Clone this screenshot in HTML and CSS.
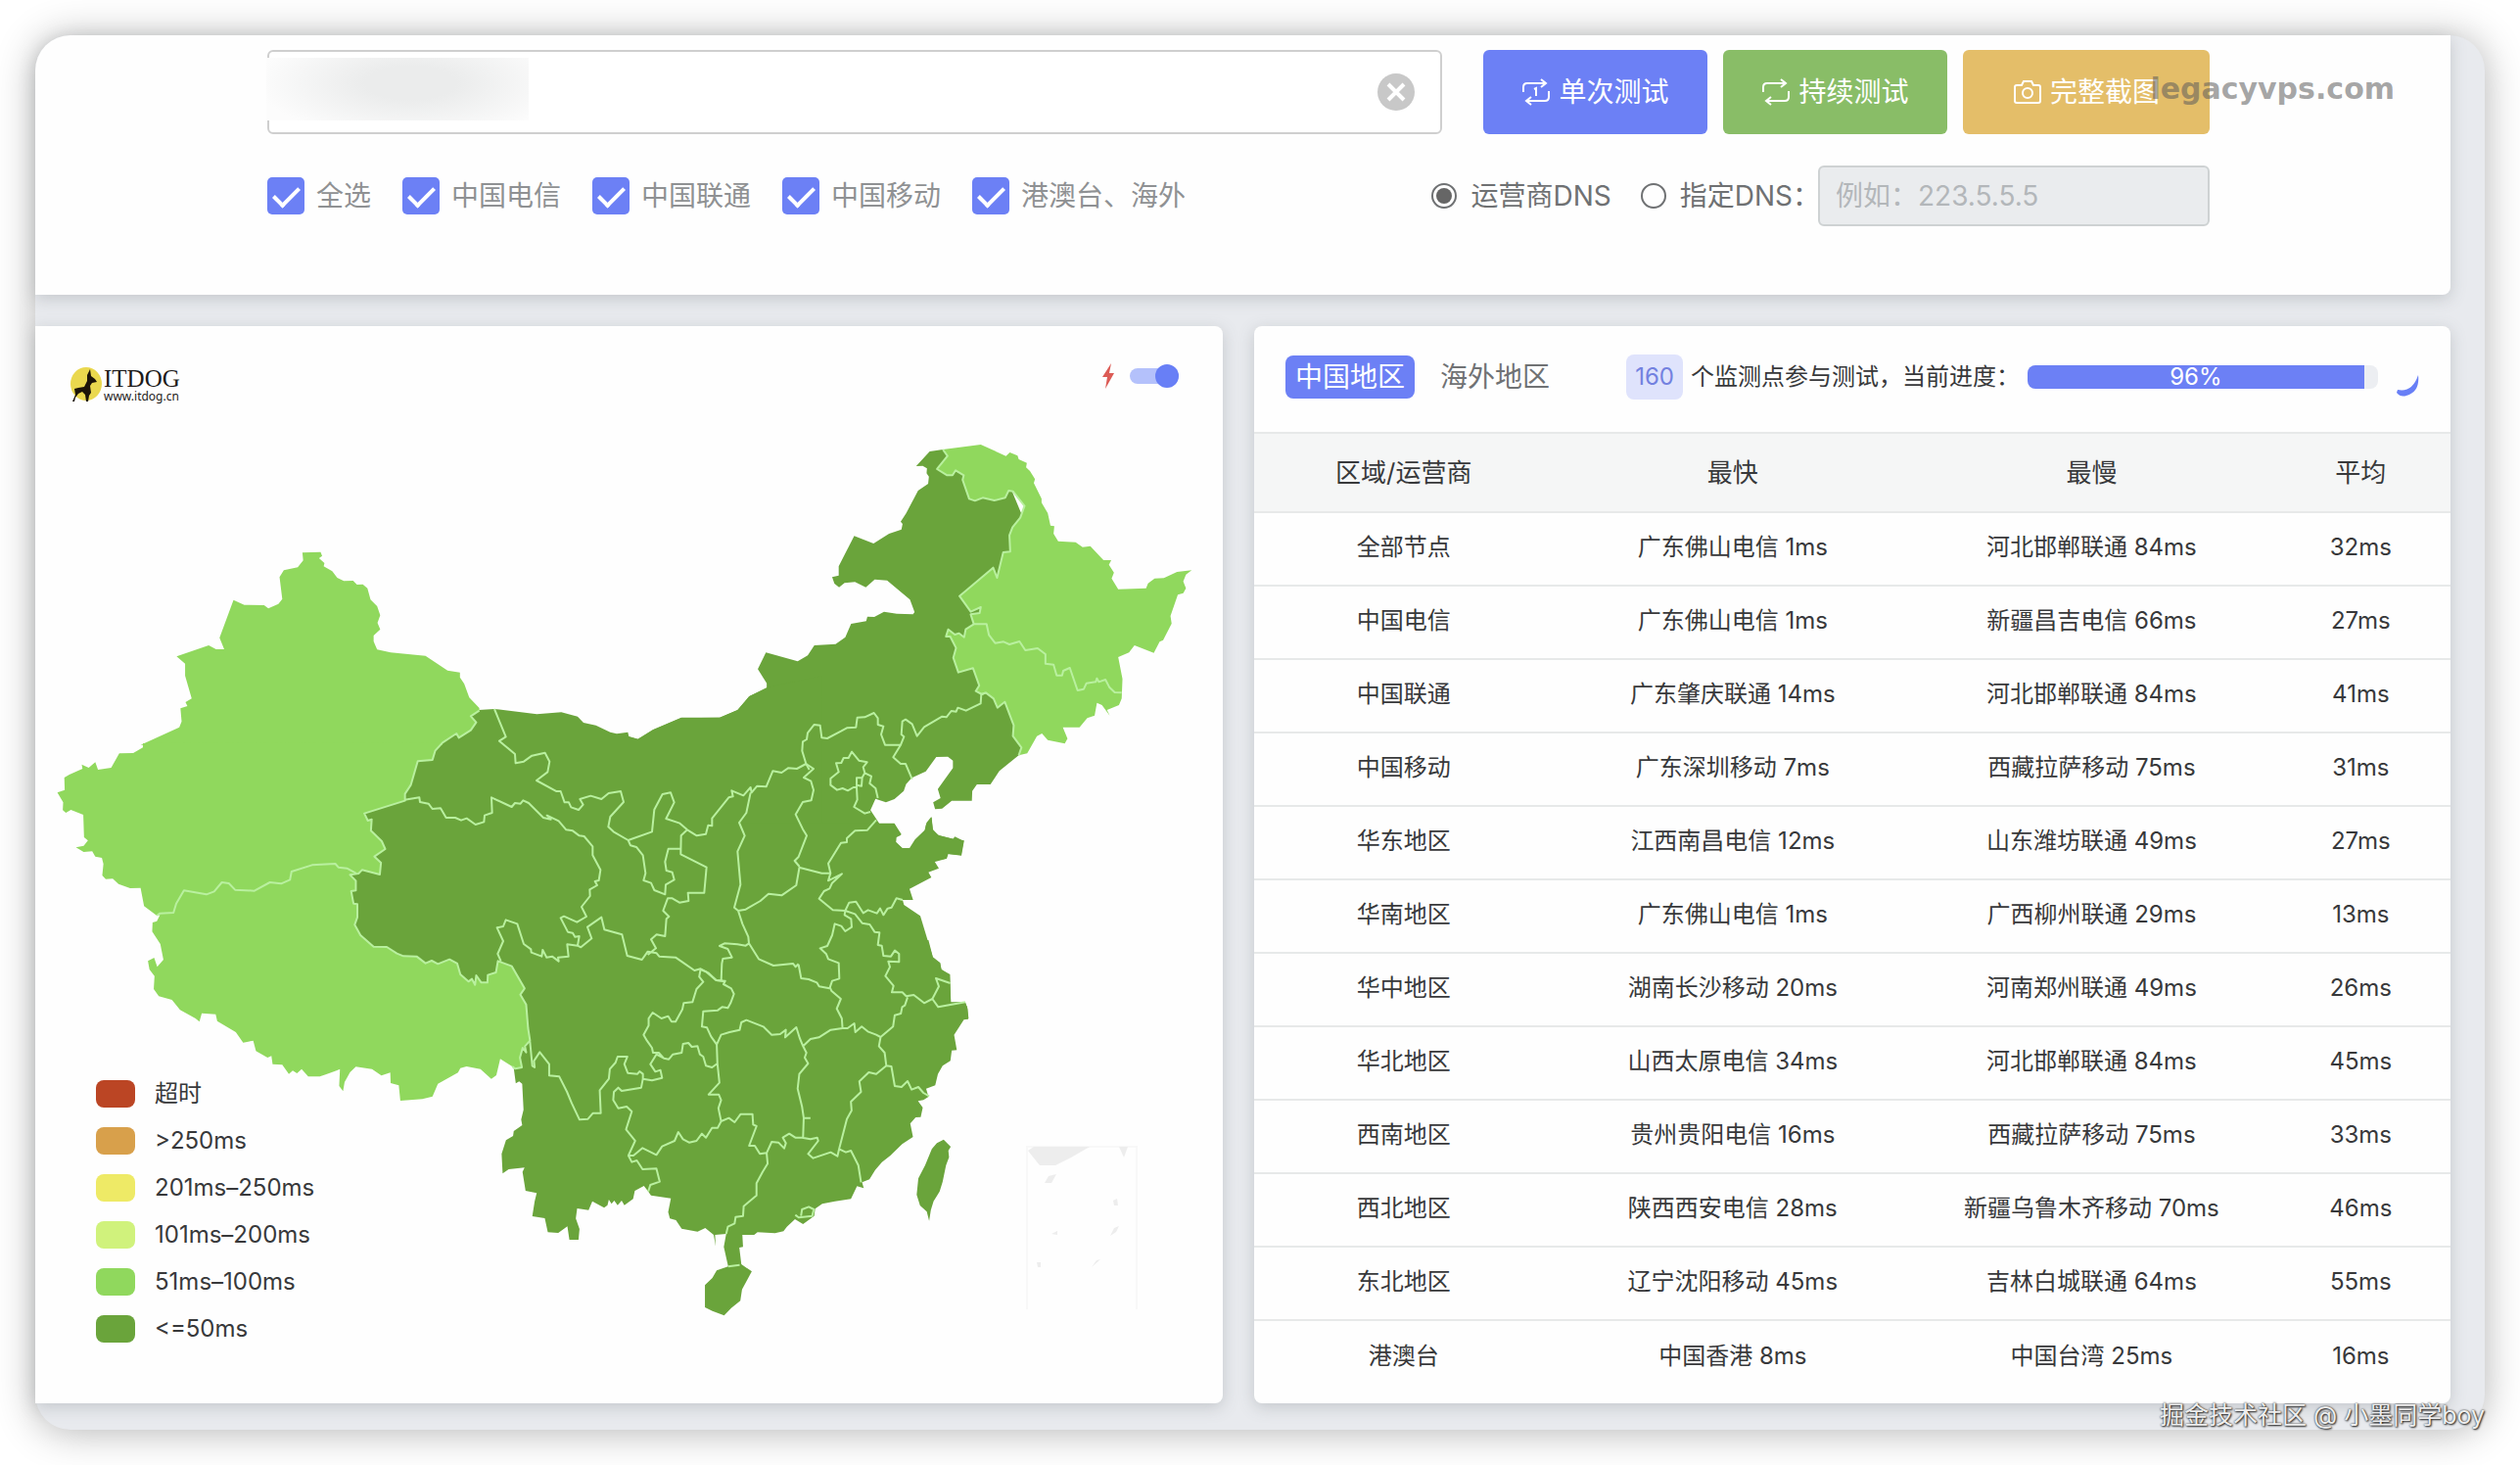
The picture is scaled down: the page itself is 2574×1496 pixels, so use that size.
FILE: index.html
```html
<!DOCTYPE html>
<html lang="zh-CN">
<head>
<meta charset="utf-8">
<title>ITDOG</title>
<link rel="stylesheet" href="styles.css">
</head>
<body>
<main class="window">
  <form class="card query">
    <div class="query-row">
      <div class="host">
        <input class="host-input" type="text" aria-label="host">
        <span class="host-mask"></span>
        <button class="host-clear" type="button" aria-label="clear">
          <svg viewBox="0 0 38 38"><circle cx="19" cy="19" r="19"/><path d="M11 11l16 16M27 11L11 27"/></svg>
        </button>
      </div>
      <div class="actions">
        <button class="btn btn-once" type="button">
          <svg class="btn-icon" viewBox="0 0 30 28"><path d="M2 14V9q0-4 4-4h18M20 1l5 4-5 4M28 13v6q0 4-4 4H6M10 19l-5 4 5 4M13 11l2-1v8"/></svg>
          单次测试
        </button>
        <button class="btn btn-loop" type="button">
          <svg class="btn-icon" viewBox="0 0 30 28"><path d="M2 14V9q0-4 4-4h18M20 1l5 4-5 4M28 13v6q0 4-4 4H6M10 19l-5 4 5 4"/></svg>
          持续测试
        </button>
        <button class="btn btn-shot" type="button">
          <svg class="btn-icon" viewBox="0 0 30 28"><path d="M4 7h5l2-4h8l2 4h5q2 0 2 2v14q0 2-2 2H4q-2 0-2-2V9q0-2 2-2z"/><circle cx="15" cy="15" r="5"/></svg>
          完整截图
        </button>
        <span class="site-mark">legacyvps.com</span>
      </div>
    </div>
    <div class="query-row options">
      <div class="checks">
        <label class="check"><input type="checkbox" checked>全选</label>
        <label class="check"><input type="checkbox" checked>中国电信</label>
        <label class="check"><input type="checkbox" checked>中国联通</label>
        <label class="check"><input type="checkbox" checked>中国移动</label>
        <label class="check"><input type="checkbox" checked>港澳台、海外</label>
      </div>
      <div class="dns">
        <label class="radio"><input type="radio" name="dns" checked>运营商DNS</label>
        <label class="radio"><input type="radio" name="dns">指定DNS：</label>
        <input class="dns-input" type="text" placeholder="例如：223.5.5.5" aria-label="DNS" disabled>
      </div>
    </div>
  </form>

  <div class="panels">
    <section class="card map-card">
      <header class="map-head">
        <a class="logo" href="#">
          <svg class="logo-dog" viewBox="0 0 32 36">
            <ellipse cx="16" cy="17" rx="16" ry="17"/>
            <path d="M20 2L21 9L25 12L27 15L22 16L20 19L21 26L19 29L18 35H16L15 28L12 25L8 27L5 31L4 35H2L5 28L4 22L8 21L14 20L17 14L17 8z"/>
          </svg>
          <span class="logo-text"><b>ITDOG</b><small>www.itdog.cn</small></span>
        </a>
        <label class="live">
          <svg class="bolt" viewBox="0 0 12 26"><path d="M9 0L0 14H5L3 26L12 10H7z"/></svg>
          <input class="switch" type="checkbox" checked aria-label="live">
        </label>
      </header>
      <div class="map-body">
        <svg class="map" viewBox="36 433 1213 1000">
          <g class="fast">
            <path transform="translate(640 420) scale(.39541 .33333)" d="M817 117L783 123L748 168L765 167L776 175L775 190L781 200L779 222L753 243L722 313L708 338L713 345L710 362L678 375L638 405L588 382L548 475L548 503L531 508L537 528L549 539L563 526L590 523L618 539L641 515L673 518L732 577L744 615L740 622L698 620L665 614L640 630L622 629L619 643L580 651L565 692L540 713L485 717L468 748L442 766L360 739L339 790L362 833L362 848L318 872L287 915L240 938L140 940L70 975L29 1004L5 997L0 985L0 1380L797 1380L827 1370L831 1356L865 1361L872 1315L845 1310L807 1300L792 1285L787 1243L775 1260L770 1283L745 1312L731 1338L712 1338L696 1320L696 1304L710 1296L692 1263L653 1263L630 1222L643 1187L670 1198L692 1188L716 1163L722 1142L737 1123L773 1103L800 1059L830 1058L843 1070L843 1093L804 1157L811 1185L792 1198L797 1219L815 1217L840 1193L892 1193L893 1163L905 1143L940 1143L963 1102L1013 1054L1100 900L1050 400L980 200z"/>
            <path transform="translate(340 680) scale(.33333)" d="M447 135L495 132L625 148L700 142L750 155L768 174L806 182L850 203L870 208L904 203L907 216L935 224L980 196L1068 158L1187 158L1240 135L1275 94L1330 66L1500 30V1200H600L450 1100L0 1000V400L250 200z"/>
            <path transform="translate(740 700) scale(.33333)" d="M635 403L638 440L655 458L700 470L706 463L733 476L725 520L684 516L680 530L643 538L657 560L625 572L634 588L567 623L578 657L546 657L550 672L600 706L640 838L660 850L665 870L690 888L694 970L738 970L745 990L748 1020H0V422H520L541 458L527 465L525 480L545 498H570L613 450L618 425z"/>
            <path transform="translate(480 960) scale(.34439 .33333)" d="M1360 0L1373 52L1395 70L1398 90L1424 105L1426 192L1467 190L1475 205L1478 242L1465 244L1436 290L1444 337L1429 338L1425 370L1402 385L1388 410L1380 445L1353 455L1360 480L1345 490L1329 493L1343 513L1337 542L1322 543L1306 562L1314 603L1282 625L1247 660L1222 680L1202 704L1185 733L1163 742L1168 760L1148 754L1130 793L1083 800L1045 808L1024 823L1021 845L988 870L964 855L940 878L930 892L905 898L853 895L843 903H808L810 940L799 942L805 993L836 1015L807 1070L802 1105L775 1127L754 1150L719 1136L697 1125V1057L719 1035L732 1012L766 1000L753 940L760 900L727 903L729 938L723 903L698 882L675 893L628 884L611 858L593 853L588 833L596 791L537 782L529 770L516 753L489 768L484 793L458 812L450 798L438 812L428 798L420 808L412 795L408 812L398 820L363 800L352 827L318 822L314 853L325 885L322 918H295L289 877L262 897L231 895L222 852L185 846L192 800L198 775L165 768L156 710L162 697L115 702L97 715L94 655L107 613L128 600L130 585L155 567L152 550L159 520L155 440L146 433L136 439L129 385L100 350V0z"/>
            <path transform="translate(480 960) scale(.34439 .33333)" d="M1405 611L1426 633L1419 645L1421 665L1412 690L1402 740L1393 770L1375 800L1367 827L1362 860L1355 832L1335 813L1325 780L1330 730L1350 690L1370 640L1385 622z"/>
          </g>
          <g class="medium">
            <path transform="translate(40 340) scale(.39541 .33333)" d="M680 673L727 671L731 683L723 690L737 705L735 715L757 730L770 750L787 760L811 759L821 771L836 770L848 782L856 817L873 837L881 865L874 888L881 908L864 927V945L873 970L908 979L998 989L1055 1034L1087 1040V1055L1098 1075L1111 1117L1137 1149V1157L1115 1174L1129 1193L1115 1217L1084 1240L1078 1225L1042 1257V1262H262L362 1208L368 1190L365 1150L383 1143L378 1131L394 1120L377 1050V1013L355 991L438 957L457 969H478L466 934L502 818L530 833L581 834L592 844L618 830L628 815L621 748L632 727L668 718L682 697z"/>
            <path transform="translate(40 740) scale(.39541 .33333)" d="M1042 55L1023 80L1016 108L978 112L960 185L945 212V233L840 272L849 294L859 290L857 325L885 357L894 381L866 404L883 423L880 459L834 445L825 456L803 460L818 478V508L806 510L812 548L822 550V590L815 613L830 645L864 680L898 681L924 701L941 709L975 710L998 731L1014 723L1030 733L1060 719L1080 732L1088 765L1109 787L1118 779L1126 797L1129 768L1142 790H1158L1159 767L1180 759L1185 724L1221 740L1254 808L1243 827L1258 857L1263 930L1268 968L1255 985L1258 1004L1249 990L1242 1020L1247 1050L1230 1054L1222 1047L1191 1024L1181 1074L1168 1085L1140 1055L1104 1047L1088 1052L1082 1066L1030 1100L1016 1139L990 1147L933 1152L929 1105L908 1098L907 1066L884 1075L860 1055L818 1048L803 1065L789 1095L785 1123L775 1107L777 1055L768 1060L740 1072L725 1078H695L678 1055L666 1068L655 1060L645 1070L628 1042L603 1040L600 1015L590 1020L560 1000L553 968L527 974L508 942L460 908L456 887L420 884L414 910L404 900L364 874L343 843L309 832L296 810L298 770L285 750L281 724L297 714L305 742L321 720L313 672L292 634L293 606L304 602L312 583L304 585L271 556L262 500L235 501L205 488L190 472L172 473L163 462L166 427L162 408L145 404L137 388L115 390L95 376L115 371L126 355L116 345L114 276L82 261L69 270L61 262L62 238L47 208L66 200L65 162L78 153L112 135L110 122L128 132L145 115L152 138L186 132L207 88L243 87L268 70V57z"/>
            <path transform="translate(640 420) scale(.39541 .33333)" d="M817 117L915 102L980 137L990 126L1010 136L1013 147L1034 158L1032 172L1042 183L1055 208L1052 220L1072 268V280L1088 312L1095 350L1105 352L1103 375L1115 398L1160 401L1178 416L1198 413L1232 456H1252L1246 470L1259 494L1253 512L1270 545L1342 542L1347 527L1364 512L1388 511L1422 492L1460 487L1445 500L1438 521L1445 542L1438 557L1424 562L1405 627L1408 650L1386 701L1377 706L1362 740L1312 717L1298 739L1270 753L1281 820L1279 880L1272 900L1241 915L1248 932L1228 900L1215 893L1209 932L1190 940L1170 968H1127L1139 1003L1132 1018L1088 1007L1073 987L1060 995L1035 1048L1013 1054L1020 1030L998 995L1000 962L977 890L958 908L948 880L928 862L918 867L902 857L911 840L895 787L857 800L844 755L851 725L836 690H825L831 668L848 684L859 680L872 692L876 668L897 652L889 622L912 618L915 600L889 614L860 566L947 479L957 510L973 432L991 430L989 380L997 355L1017 326L1028 290L998 245L987 243L978 265L950 273L920 265L900 274L885 268L868 210L871 196L850 181L842 196H828L802 177L829 137z"/>
          </g>
          <g class="borders">
            <path transform="translate(40 740) scale(.39541 .33333)" d="M1137 -43L1115 -26L1129 -7L1115 17L1084 40L1078 27L1042 55L1023 80L1016 108L978 112L960 185L945 212V233L840 272L849 294L859 290L857 325L885 357L894 381L866 404L883 423L880 459L834 445L825 456L803 460L818 478V508L806 510L812 548L822 550V590L815 613L830 645L864 680L898 681L924 701L941 709L975 710L998 731L1014 723L1030 733L1060 719L1080 732L1088 765L1109 787L1118 779L1126 797L1129 768L1142 790H1158L1159 767L1180 759L1185 724L1221 740L1254 808L1243 827L1258 857L1263 930L1268 968L1255 985L1258 1004L1249 990L1242 1020L1247 1050L1230 1054L1222 1047M304 585L312 578L347 576L354 548L374 508L432 520L452 511L472 483L490 486L506 506L556 509L596 483L625 487L648 475L652 450L705 430L765 426L773 437L795 440L818 455"/>
            <path transform="translate(640 420) scale(.39541 .33333)" d="M1013 1054L1020 1030L998 995L1000 962L977 890L958 908L948 880L928 862L918 867L902 857L911 840L895 787L857 800L844 755L851 725L836 690H825L831 668L848 684L859 680L872 692L876 668L897 652L889 622L912 618L915 600L889 614L860 566L947 479L957 510L973 432L991 430L989 380L997 355L1017 326L1028 290L998 245L987 243L978 265L950 273L920 265L900 274L885 268L868 210L871 196L850 181L842 196H828L802 177L829 137L817 117M897 652H930L936 685L952 710L974 706L989 714L1015 705L1030 732L1062 726L1082 744V773L1103 776L1111 809H1125L1128 795L1145 786L1165 855L1181 851L1188 833L1212 829L1215 818L1220 829L1237 822L1247 845L1261 861L1279 862"/>
            <path transform="translate(340 680) scale(.33333)" d="M495 132L530 217L510 230L558 270L560 298L585 293L610 275L650 266L664 293L658 325L624 351L684 384H698L710 418H723L730 433L753 441L767 425L757 408L790 398L823 408L845 390L882 384L891 417L850 462L844 493L860 508L905 534L978 508L985 440L1010 393L1035 388L1046 418L1021 468L1063 482L1086 502L1115 520L1143 515L1150 488L1162 490V467L1213 403L1226 400L1222 382L1258 397L1280 372L1283 388L1300 368L1328 370L1348 322L1375 327L1395 313L1422 315L1450 300M220 410L265 403L267 417L293 422L305 438L330 436L347 465H375L393 473L410 467L437 486L463 478L465 458L488 450L486 403L548 432L558 420L575 422L583 412L600 420L645 465L668 470L656 458L692 475L715 502L735 505L755 520L770 522L796 553V580L820 625L815 657L803 660L810 672L787 685L788 705L762 738L777 768L748 785L708 767L698 772L720 815L735 818L742 830L755 828L750 857L718 853L722 890L690 893L692 905L672 890L655 893L643 870L640 890L608 878L607 868L585 852L565 790L530 778L522 798L503 802L522 843L505 882L515 905M750 857L760 862L793 835L780 800L823 770L832 808L886 823L902 888L947 900L965 875L992 880L1000 890L1050 893L1075 910L1108 933L1127 928L1150 940L1175 963L1202 967M965 885L990 865L975 838L992 823L1018 828L1022 775L1030 768L1012 750L1026 712H1040L1062 725L1090 720L1088 695H1138L1145 617L1066 577V560H1028L1018 600L1022 627L1040 632L1046 655L1020 670L1018 700L985 687L975 665L952 657L958 635L950 580L930 555L912 550L905 534M1086 502L1067 520L1066 577M1280 388L1267 450L1245 480L1262 520L1240 568L1249 670L1230 740L1242 750L1255 790L1273 830L1275 850L1265 857L1240 853L1200 850L1185 858L1210 867L1223 893L1195 897L1192 912L1190 963M1242 750L1265 746L1310 720L1335 698L1375 703L1420 672L1430 615M1450 300L1473 315L1443 342L1465 353L1473 380L1466 412L1440 417L1418 455L1440 500L1452 520L1427 585L1415 597L1430 615M1275 850L1305 898L1350 918L1410 912L1418 922L1427 913"/>
            <path transform="translate(740 700) scale(.33333)" d="M260 258L250 240L238 200L240 172L252 165L255 145L275 120L293 122L298 160L315 162L357 140L375 130L403 128L407 98L430 97L458 84L470 100V120L487 125L480 150L492 182H540L517 220L540 240H555L575 287M540 182L550 157L542 150L545 110L555 104L575 118L590 155L612 127L667 95L680 97L695 78L710 80L715 68L740 77L785 55L787 27L800 22M390 203L380 222H365L358 237L342 238L350 265L325 285V305L345 320L362 315L378 322L395 312H405V283L422 282L430 268L425 250L437 235L412 230zM430 268L450 278L445 300L463 315L470 345M422 282L420 308L405 305M405 312L407 350L397 372L430 392L447 387M465 412L438 443L400 445L375 468V480L357 482L318 545L325 575H298L228 557M325 575L318 598L360 577L330 605L322 622L305 630L290 653L332 688L370 690L382 665L403 662L425 697L440 688L467 698L477 683L487 703L500 683L512 680L527 652L546 657M370 690L400 700L422 728L445 732L460 755L475 757L470 795L482 797L487 828L510 830L522 812L535 822V847L502 845L507 862L493 890L518 920L513 940H545L557 952L580 948L612 973L637 960L657 922L648 897L692 912M637 960L655 985L738 970M370 690L368 703L388 715L390 740L370 753L358 737L338 730L330 765L315 798L293 805L312 823L318 838L350 850L352 898L330 905L322 928M227 855L235 897L258 900L283 910L290 922L322 928"/>
            <path transform="translate(480 960) scale(.34439 .33333)" d="M684 90L680 112L692 128L672 150L660 190L634 193L630 212L610 250H598L588 233L568 240L542 222L530 240V262L515 290L525 308L540 330L543 345H560L575 362L590 365L602 350L628 345L632 318L648 315L658 327L675 325L682 350L692 357L700 385L718 390L734 378L732 320L715 295L703 268L688 265L692 218L735 215L748 205L765 208L773 193L783 165L775 148L752 135L757 125L730 123L700 97zM732 320L745 290L770 282L800 275L805 252L820 245L870 265L895 290L920 288L937 275L935 298L968 267L978 300L988 325L1010 303L1035 298L1070 275L1105 270L1103 240L1088 210L1100 180L1072 155L1068 145M1105 270H1120L1140 255L1143 282L1162 265L1180 280L1205 290L1218 297L1213 325L1230 345L1235 385L1205 410L1183 405L1155 433L1160 465L1130 495L1132 522L1118 548L1105 600L1095 640M1235 385L1250 387L1260 447L1280 450L1298 432L1310 458L1330 450L1345 468L1362 478M1218 297L1255 265L1260 230L1278 225L1282 205L1290 200L1298 175M988 325L998 345L993 360L1003 378L977 410L972 455L985 510L990 545H1010M990 545L988 605M745 555L768 545L785 558L803 533H838L840 565L850 570L828 630H845L860 655L880 652L895 618L915 620L932 638L937 622L928 605L947 593L965 605H985L1010 610L1030 605L1033 615L1003 655L1018 668L1070 650L1090 662L1095 640L1115 650L1130 645L1152 690L1160 742M880 652L883 685L868 710L850 745V782L812 815L810 845L788 848L785 868L765 878L760 900M766 1000L800 995M734 378L740 437L708 473H738L745 490L737 515L745 555L735 575H718L700 605L688 593L672 615L650 620L632 610L618 588L607 615L570 632L553 658L512 637L485 660H470L480 680L495 675L512 702L553 700L563 740L535 750L529 770M470 660L490 615L463 580L480 525L465 510L440 515L425 490L427 465L440 452L450 462L508 452L513 425L540 430L570 422L565 398L550 403L535 380L553 350L575 362M178 310L185 385L192 390L190 370L207 343L235 380V415L265 418L288 465L302 500L325 550L350 548L365 530H388L385 460L412 425L415 395L432 375L438 357H467L458 380L468 407L497 410L503 402L513 410V425M982 845L985 825L1005 817L1020 825L1015 845L975 850L965 842"/>
          </g>
          <g class="islands">
            <path class="islands-frame" d="M1049 1337V1171H1161V1337"/>
            <path d="M1050 1175L1056 1171H1113L1094 1182L1078 1190H1062zM1143 1171H1152L1148 1182zM1067 1208L1071 1201L1079 1199L1074 1208zM1137 1226L1141 1224L1142 1231H1138zM1134 1262L1138 1254L1143 1252L1140 1258zM1115 1294L1120 1287L1124 1286zM1059 1289H1063V1294H1060zM1074 1260L1080 1257V1261z"/>
          </g>
        </svg>
        <ul class="legend">
          <li><i class="swatch timeout"></i>超时</li>
          <li><i class="swatch over250"></i>&gt;250ms</li>
          <li><i class="swatch to250"></i>201ms–250ms</li>
          <li><i class="swatch to200"></i>101ms–200ms</li>
          <li><i class="swatch to100"></i>51ms–100ms</li>
          <li><i class="swatch to50"></i>&lt;=50ms</li>
        </ul>
      </div>
    </section>

    <section class="card result-card">
      <header class="result-head">
        <nav class="tabs">
          <button class="tab active" type="button">中国地区</button>
          <button class="tab" type="button">海外地区</button>
        </nav>
        <span class="count">160</span>
        <span class="status">个监测点参与测试，当前进度：</span>
        <div class="progress"><div class="progress-bar" style="width:96%">96%</div></div>
        <svg class="spinner" viewBox="0 0 24 24"><path d="M23 2Q25 19 11 23Q5 25 1 20L2 17Q17 20 23 2z"/></svg>
      </header>
      <table class="result">
        <colgroup><col class="c-area"><col class="c-fast"><col class="c-slow"><col class="c-avg"></colgroup>
        <thead><tr><th>区域/运营商</th><th>最快</th><th>最慢</th><th>平均</th></tr></thead>
        <tbody>
          <tr><td>全部节点</td><td>广东佛山电信 1ms</td><td>河北邯郸联通 84ms</td><td>32ms</td></tr>
          <tr><td>中国电信</td><td>广东佛山电信 1ms</td><td>新疆昌吉电信 66ms</td><td>27ms</td></tr>
          <tr><td>中国联通</td><td>广东肇庆联通 14ms</td><td>河北邯郸联通 84ms</td><td>41ms</td></tr>
          <tr><td>中国移动</td><td>广东深圳移动 7ms</td><td>西藏拉萨移动 75ms</td><td>31ms</td></tr>
          <tr><td>华东地区</td><td>江西南昌电信 12ms</td><td>山东潍坊联通 49ms</td><td>27ms</td></tr>
          <tr><td>华南地区</td><td>广东佛山电信 1ms</td><td>广西柳州联通 29ms</td><td>13ms</td></tr>
          <tr><td>华中地区</td><td>湖南长沙移动 20ms</td><td>河南郑州联通 49ms</td><td>26ms</td></tr>
          <tr><td>华北地区</td><td>山西太原电信 34ms</td><td>河北邯郸联通 84ms</td><td>45ms</td></tr>
          <tr><td>西南地区</td><td>贵州贵阳电信 16ms</td><td>西藏拉萨移动 75ms</td><td>33ms</td></tr>
          <tr><td>西北地区</td><td>陕西西安电信 28ms</td><td>新疆乌鲁木齐移动 70ms</td><td>46ms</td></tr>
          <tr><td>东北地区</td><td>辽宁沈阳移动 45ms</td><td>吉林白城联通 64ms</td><td>55ms</td></tr>
          <tr><td>港澳台</td><td>中国香港 8ms</td><td>中国台湾 25ms</td><td>16ms</td></tr>
        </tbody>
      </table>
    </section>
  </div>
  <span class="author-mark">掘金技术社区 @ 小墨同学boy</span>
</main>
</body>
</html>
```
FILE: styles.css
```css
* { box-sizing: border-box; }

body {
  margin: 0;
  padding: 36px;
  background: #fff;
  color: #38393b;
  font-family: "Inter", "Noto Sans CJK SC", sans-serif;
  font-size: 24px;
  line-height: 32px;
}

button, input { font: inherit; color: inherit; }
button { border: 0; padding: 0; cursor: pointer; }

.window {
  position: relative;
  display: flex;
  flex-direction: column;
  gap: 32px;
  padding: 0 35px 27px 0;
  border-radius: 36px;
  background: #e8eaee;
  box-shadow: 0 2px 40px rgba(0, 0, 0, .3);
}

.card {
  background: #fefefe;
  border-radius: 8px;
  box-shadow: 0 4px 16px rgba(90, 100, 105, .25);
}

/* Query form */
.query {
  display: flex;
  flex-direction: column;
  gap: 32px;
  padding: 15px 246px 70px 237px;
  border-radius: 36px 0 8px 0;
  font-size: 28px;
}

.query-row {
  display: flex;
  align-items: center;
  justify-content: space-between;
  gap: 42px;
}

.host { position: relative; flex: 1; display: flex; }

.host-input {
  width: 100%;
  height: 86px;
  padding: 0 80px 0 20px;
  border: 2px solid #cfcfcf;
  border-radius: 6px;
  background: #fff;
}

.host-mask {
  position: absolute;
  left: -1px;
  top: 8px;
  width: 268px;
  height: 64px;
  background: radial-gradient(ellipse 58% 90% at 55% 40%, #ebecec 30%, #fcfcfc);
}

.host-clear {
  position: absolute;
  right: 28px;
  top: 24px;
  width: 38px;
  height: 38px;
  background: none;
}
.host-clear svg { display: block; }
.host-clear circle { fill: #c8c8c8; }
.host-clear path { stroke: #fff; stroke-width: 4; }

.actions { position: relative; display: flex; gap: 16px; }

.btn {
  display: flex;
  align-items: center;
  justify-content: center;
  gap: 8px;
  width: 229px;
  height: 86px;
  border-radius: 6px;
  color: #fff;
}
.btn-once { background: #6c80f5; }
.btn-loop { background: #89bd67; }
.btn-shot { width: 252px; background: #e4be69; }
.btn-icon { width: 30px; height: 28px; fill: none; stroke: #fff; stroke-width: 2; }

.site-mark {
  position: absolute;
  right: -189px;
  top: 22px;
  color: rgba(90, 90, 90, .55);
  font: bold 30px/36px "DejaVu Sans", sans-serif;
}

.checks, .dns { display: flex; align-items: center; }
.checks { gap: 32px; color: #8f9193; }
.check, .radio { display: flex; align-items: center; }
.check { gap: 12px; }

.check input {
  appearance: none;
  display: flex;
  justify-content: center;
  width: 38px;
  height: 38px;
  margin: 0;
  border-radius: 5px;
  background: #6c80f5;
}
.check input::before {
  content: "";
  width: 11px;
  height: 22px;
  margin-top: 4px;
  border: solid #fff;
  border-width: 0 4px 4px 0;
  transform: rotate(45deg);
}

.dns { gap: 30px; color: #6f7173; }
.radio { gap: 14px; }
.radio input {
  appearance: none;
  width: 26px;
  height: 26px;
  margin: 0;
  border: 2px solid #6f7173;
  border-radius: 50%;
}
.radio input:checked { background: #666 content-box; padding: 3px; }

.dns-input {
  width: 400px;
  height: 62px;
  margin-left: -32px;
  padding: 0 16px;
  border: 2px solid #ced2d3;
  border-radius: 6px;
  background: #eaecee;
}
.dns-input::placeholder { color: #b3b7ba; opacity: 1; }

/* Panels */
.panels {
  display: grid;
  grid-template-columns: 1213fr 1222fr;
  gap: 32px;
}

.map-card { border-radius: 0 8px 8px 0; }

.map-head {
  display: flex;
  align-items: flex-start;
  justify-content: space-between;
  height: 100px;
  padding: 38px 45px 0 36px;
}

.logo {
  display: flex;
  gap: 2px;
  margin-top: 4px;
  color: #1d1b1a;
  text-decoration: none;
}
.logo-dog { width: 32px; height: 36px; }
.logo-dog ellipse { fill: #ead84e; }
.logo-dog path { fill: #1c1408; }
.logo-text { display: flex; flex-direction: column; }
.logo-text b { font: 25px/24px "Liberation Serif", serif; }
.logo-text small { font: 12px/12px "Noto Sans", sans-serif; }

.live { display: flex; align-items: center; gap: 16px; }
.bolt { width: 12px; height: 26px; fill: #dc5b55; }
.switch {
  appearance: none;
  display: flex;
  align-items: center;
  justify-content: flex-end;
  width: 50px;
  height: 16px;
  margin: 0;
  border-radius: 8px;
  background: #b4c1fb;
}
.switch::before {
  content: "";
  width: 24px;
  height: 24px;
  border-radius: 50%;
  background: #687ff6;
}

.map-body { display: grid; }
.map, .legend { grid-area: 1 / 1; }
.map { display: block; width: 100%; }
.fast { fill: #6aa43b; }
.medium { fill: #90d85d; }
.borders path {
  fill: none;
  stroke: #b9f09f;
  stroke-width: 2px;
  stroke-linejoin: round;
  vector-effect: non-scaling-stroke;
}
.islands { fill: #ededed; }
.islands .islands-frame { fill: none; stroke: #f8f8f8; stroke-width: 2; }

.legend {
  z-index: 1;
  align-self: end;
  justify-self: start;
  display: flex;
  flex-direction: column;
  gap: 16px;
  margin: 0;
  padding: 0 0 60px 62px;
  list-style: none;
}
.legend li { display: flex; align-items: center; gap: 20px; }
.swatch { width: 40px; height: 28px; border-radius: 8px; }
.timeout { background: #bb4524; }
.over250 { background: #d8a04b; }
.to250 { background: #eeea66; }
.to200 { background: #d0f27c; }
.to100 { background: #90d85d; }
.to50 { background: #6aa43b; }

/* Results */
.result-card { overflow: hidden; }

.result-head {
  display: flex;
  align-items: center;
  height: 108px;
  padding: 0 32px 4px;
}
.tabs { display: flex; gap: 16px; margin-right: 68px; font-size: 28px; }
.tab {
  height: 44px;
  padding: 0 10px;
  border-radius: 8px;
  background: none;
  color: #707274;
}
.tab.active { background: #6c80f5; color: #fff; }
.count {
  width: 58px;
  height: 46px;
  margin-right: 8px;
  border-radius: 8px;
  background: #dfe3fc;
  color: #7381e0;
  line-height: 46px;
  text-align: center;
}
.status { white-space: nowrap; margin-right: 8px; }
.progress {
  flex: 1;
  height: 24px;
  margin-right: 18px;
  border-radius: 8px;
  background: #eceef2;
}
.progress-bar {
  height: 24px;
  border-radius: 8px 0 0 8px;
  background: #6c80f5;
  color: #fff;
  line-height: 24px;
  text-align: center;
}
.spinner { width: 24px; height: 24px; fill: #687ff6; margin-top: 16px; }

.result { width: 100%; border-collapse: collapse; table-layout: fixed; text-align: center; }
.c-area { width: 25%; }
.c-fast, .c-slow { width: 30%; }
.c-avg { width: 15%; }
.result th {
  height: 81px;
  padding: 0;
  border-top: 2px solid #e7e9e9;
  background: #f5f6f6;
  font-size: 26px;
  font-weight: 400;
}
.result td { height: 75px; padding: 0 0 3px; border-top: 2px solid #e7e9e9; }
.result tr:last-child td { height: 85px; padding-bottom: 12px; }

.author-mark {
  position: absolute;
  right: 0;
  bottom: -1px;
  color: #eee;
  font-size: 25px;
  text-shadow: 0 0 2px #222, 1px 1px 2px #222;
}
```
